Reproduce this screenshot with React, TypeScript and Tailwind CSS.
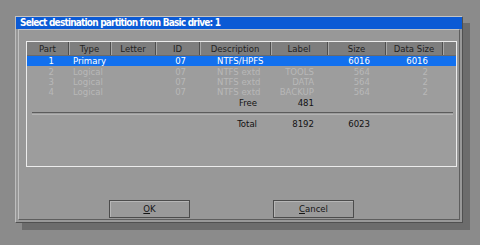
import React from 'react';

const cols = [
    { key: 'part', title: 'Part', w: 'w-[42px]' },
    { key: 'type', title: 'Type', w: 'w-[42px]' },
    { key: 'letter', title: 'Letter', w: 'w-[45px]' },
    { key: 'id', title: 'ID', w: 'w-[44px]' },
    { key: 'desc', title: 'Description', w: 'w-[71px]' },
    { key: 'label', title: 'Label', w: 'w-[57px]' },
    { key: 'size', title: 'Size', w: 'w-[58px]' },
    { key: 'data', title: 'Data Size', w: 'w-[57px]' },
];

const rows = [
    { part: '1', type: 'Primary', id: '07', desc: 'NTFS/HPFS', label: '', size: '6016', data: '6016', selected: true },
    { part: '2', type: 'Logical', id: '07', desc: 'NTFS extd', label: 'TOOLS', size: '564', data: '2' },
    { part: '3', type: 'Logical', id: '07', desc: 'NTFS extd', label: 'DATA', size: '564', data: '2' },
    { part: '4', type: 'Logical', id: '07', desc: 'NTFS extd', label: 'BACKUP', size: '564', data: '2' },
];

const Row: React.FC<{ r: (typeof rows)[number] }> = ({ r }) => (
    <div
        className={
            'flex h-[10px] items-center leading-none ' +
            (r.selected ? 'bg-[#1270ee] text-white mb-[1px]' : 'text-[#b8b8b8]')
        }
    >
        <div className="w-[42px] text-right pr-[15px]">{r.part}</div>
        <div className="w-[42px] pl-[4px]">{r.type}</div>
        <div className="w-[45px]" />
        <div className="w-[44px] text-right pr-[14px]">{r.id}</div>
        <div className="w-[71px] pl-[17px]">{r.desc}</div>
        <div className="w-[57px] text-right pr-[14px]">{r.label}</div>
        <div className="w-[58px] text-right pr-[16px]">{r.size}</div>
        <div className="w-[57px] text-right pr-[15px]">{r.data}</div>
        <div className="flex-1" />
    </div>
);

const Button: React.FC<{ hot: string; rest: string }> = ({ hot, rest }) => (
    <button className="w-[81px] h-[18px] bg-[#9a9a9a] border border-[#4c4c4c] shadow-[inset_1px_1px_0_#b6b6b6] text-[#151515] text-[9.5px] leading-none flex items-center justify-center">
        <span className="underline underline-offset-1">{hot}</span>
        {rest}
    </button>
);

export default function App() {
    return (
        <div className="w-[480px] h-[245px] bg-[#8b8b8b] pt-[16px] pl-[15px] font-['Liberation_Sans_Narrow','DejaVu_Sans_Condensed','Liberation_Sans',sans-serif] overflow-hidden">
            <div className="w-[448px] h-[207px] bg-[#989898] border border-t-[#c4c4c4] border-l-[#bdbdbd] border-r-[#505050] border-b-[#505050] shadow-[7px_7px_0_#6c6c6c] flex flex-col">
                <div className="h-[12px] bg-[#0b5ad5] text-white font-bold text-[10px] leading-none pl-[4px] flex items-center tracking-[-0.8px]">
                    Select destination partition from Basic drive: 1
                </div>
                <div className="flex-1 mx-[2px] mb-[2px] border border-t-[#c2c2c2] border-l-[#c2c2c2] border-r-[#5e5e5e] border-b-[#5e5e5e] flex flex-col">
                    <div className="ml-[7px] mr-[2px] mt-[11px] h-[126px] border border-[#ececec] bg-[#9d9d9d] text-[9.5px]">
                        <div className="flex h-[14px] bg-[#7e7e7e] border-b border-[#6a6a6a] text-[#222]">
                            {cols.map((c) => (
                                <div
                                    key={c.key}
                                    className={c.w + ' flex items-center justify-center leading-none border-r border-r-[#4e4e4e] shadow-[1px_0_0_#a8a8a8]'}
                                >
                                    {c.title}
                                </div>
                            ))}
                            <div className="flex-1" />
                        </div>
                        {rows.map((r) => (
                            <Row key={r.part} r={r} />
                        ))}
                        <div className="flex h-[10px] items-center leading-none mt-[1px] text-[#121212]">
                            <div className="w-[173px]" />
                            <div className="w-[71px] text-right pr-[14px]">Free</div>
                            <div className="w-[57px] text-right pr-[14px]">481</div>
                        </div>
                        <div className="ml-[5px] mr-[3px] mt-[4px] h-px bg-[#5c5c5c]" />
                        <div className="ml-[5px] mr-[3px] mt-[1px] h-px bg-[#b4b4b4]" />
                        <div className="flex h-[10px] items-center leading-none mt-[4px] text-[#121212]">
                            <div className="w-[173px]" />
                            <div className="w-[71px] text-right pr-[14px]">Total</div>
                            <div className="w-[57px] text-right pr-[14px]">8192</div>
                            <div className="w-[58px] text-right pr-[16px]">6023</div>
                        </div>
                    </div>
                    <div className="flex gap-[83px] ml-[90px] mt-[33px]">
                        <Button hot="O" rest="K" />
                        <Button hot="C" rest="ancel" />
                    </div>
                </div>
            </div>
        </div>
    );
}
